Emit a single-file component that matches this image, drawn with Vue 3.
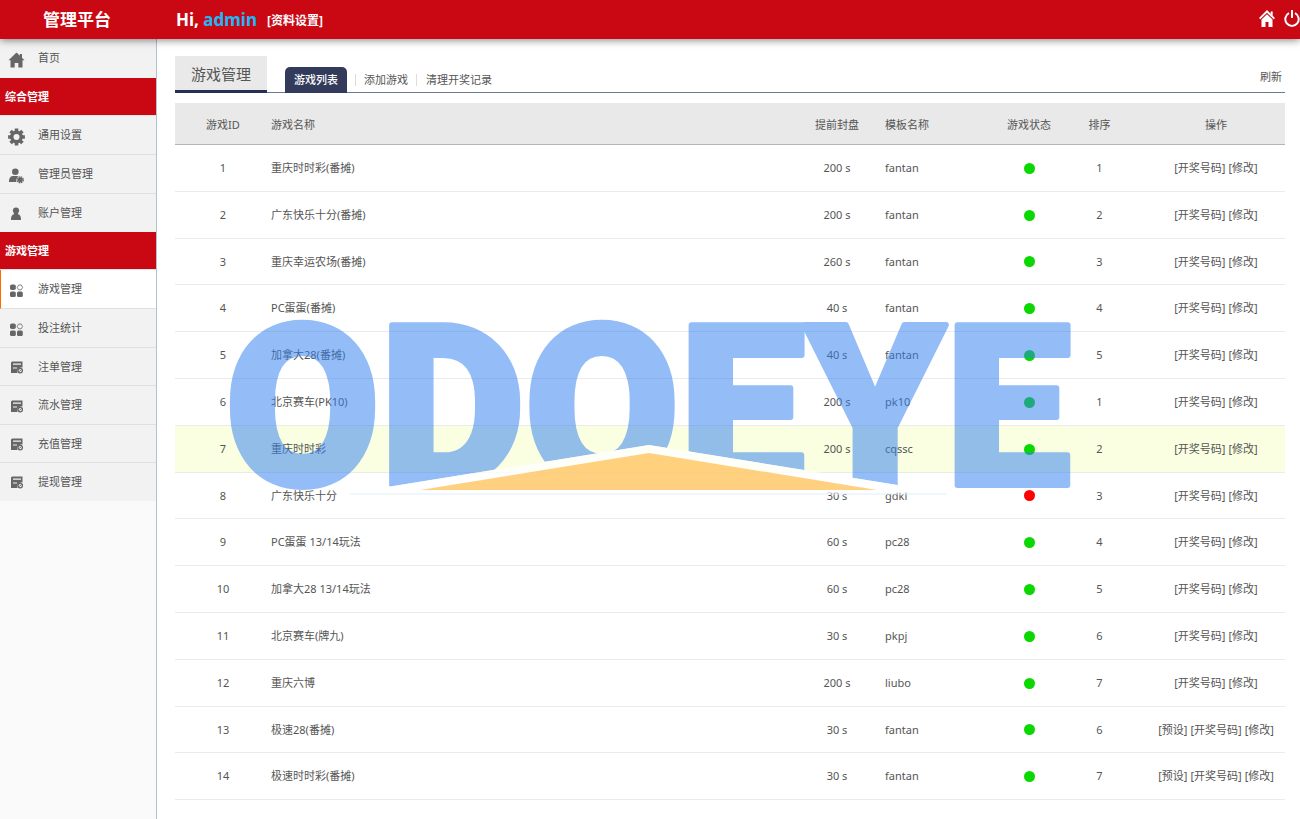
<script setup>
const groups = [
  { title: '', items: [{ label: '首页', icon: 'home' }] },
  {
    title: '综合管理',
    items: [
      { label: '通用设置', icon: 'gear' },
      { label: '管理员管理', icon: 'admin' },
      { label: '账户管理', icon: 'user' },
    ],
  },
  {
    title: '游戏管理',
    items: [
      { label: '游戏管理', icon: 'apps', active: true },
      { label: '投注统计', icon: 'apps' },
      { label: '注单管理', icon: 'book' },
      { label: '流水管理', icon: 'book' },
      { label: '充值管理', icon: 'book' },
      { label: '提现管理', icon: 'book' },
    ],
  },
]

const basic = ['开奖号码', '修改']
const extended = ['预设', '开奖号码', '修改']
const games = [
  { id: 1, name: '重庆时时彩(番摊)', lead: 200, tpl: 'fantan', on: true, sort: 1, ops: basic },
  { id: 2, name: '广东快乐十分(番摊)', lead: 200, tpl: 'fantan', on: true, sort: 2, ops: basic },
  { id: 3, name: '重庆幸运农场(番摊)', lead: 260, tpl: 'fantan', on: true, sort: 3, ops: basic },
  { id: 4, name: 'PC蛋蛋(番摊)', lead: 40, tpl: 'fantan', on: true, sort: 4, ops: basic },
  { id: 5, name: '加拿大28(番摊)', lead: 40, tpl: 'fantan', on: true, sort: 5, ops: basic },
  { id: 6, name: '北京赛车(PK10)', lead: 200, tpl: 'pk10', on: true, sort: 1, ops: basic },
  { id: 7, name: '重庆时时彩', lead: 200, tpl: 'cqssc', on: true, sort: 2, ops: basic, hover: true },
  { id: 8, name: '广东快乐十分', lead: 30, tpl: 'gdkl', on: false, sort: 3, ops: basic },
  { id: 9, name: 'PC蛋蛋 13/14玩法', lead: 60, tpl: 'pc28', on: true, sort: 4, ops: basic },
  { id: 10, name: '加拿大28 13/14玩法', lead: 60, tpl: 'pc28', on: true, sort: 5, ops: basic },
  { id: 11, name: '北京赛车(牌九)', lead: 30, tpl: 'pkpj', on: true, sort: 6, ops: basic },
  { id: 12, name: '重庆六博', lead: 200, tpl: 'liubo', on: true, sort: 7, ops: basic },
  { id: 13, name: '极速28(番摊)', lead: 30, tpl: 'fantan', on: true, sort: 6, ops: extended },
  { id: 14, name: '极速时时彩(番摊)', lead: 30, tpl: 'fantan', on: true, sort: 7, ops: extended },
]
</script>

<template>
  <div class="page">
    <header class="topbar">
      <h1 class="brand">管理平台</h1>
      <p class="hello">Hi, <span class="who">admin</span></p>
      <a class="profile" href="#">[资料设置]</a>
      <nav class="tools">
        <a href="#" aria-label="主页">
          <svg width="16" height="17" viewBox="0 0 16 17" fill="#fff">
            <path d="M8 0 0 8l1.300 1.300L8 2.700l6.700 6.600L16 8l-2.300-2.300V1.500h-2v2.200z" />
            <path d="M8 4.200 2.500 9.600V17h4v-5h3v5h4V9.600z" />
          </svg>
        </a>
        <a href="#" aria-label="退出">
          <svg width="16" height="17" viewBox="0 0 16 17" fill="none" stroke="#fff" stroke-width="2">
            <path d="M5 3.200A6.700 6.700 0 1 0 11 3.200M8 0v8" />
          </svg>
        </a>
      </nav>
    </header>

    <div class="body">
      <aside class="sidebar">
        <section v-for="(g, gi) in groups" :key="gi">
          <h2 v-if="g.title" class="group">{{ g.title }}</h2>
          <ul class="menu">
            <li v-for="item in g.items" :key="item.label">
              <a href="#" class="item" :class="{ active: item.active }">
                <svg class="icon" width="18" height="18" viewBox="0 0 18 18" fill="#666">
                  <path v-if="item.icon === 'home'" d="M9.500 1.500 1.500 9.300h2V16.500h4.200V12h3.600v4.500h4.200V9.300h2l-2.500-2.500V3h-2.200v1.700z" />
                  <g v-else-if="item.icon === 'gear'">
                    <circle cx="9.500" cy="9" r="4.700" fill="none" stroke="#666" stroke-width="3.400" />
                    <g stroke="#666" stroke-width="3.600">
                      <path d="M9.500 .6v3M9.500 14.400v3M1.100 9h3M14.900 9h3M3.600 3.100l2 2M13.400 12.900l2 2M3.600 14.900l2-2M13.400 5.100l2-2" />
                    </g>
                  </g>
                  <g v-else-if="item.icon === 'admin'">
                    <circle cx="8.300" cy="4.800" r="3.300" />
                    <path d="M2 15c0-4 1.400-5.600 3.600-6h4.600l1 .5c-1.500 1.500-2.400 3-1.700 5.500z" />
                    <circle cx="13.300" cy="12.800" r="2.500" />
                    <circle cx="13.300" cy="12.800" r="3" fill="none" stroke="#666" stroke-width="1.200" stroke-dasharray="1.600 .76" />
                  </g>
                  <g v-else-if="item.icon === 'user'">
                    <circle cx="9" cy="5.600" r="3.100" />
                    <path d="M7 8h4l.4 1.500c2 .6 2.600 2 2.600 5.500H4c0-3.500.6-4.900 2.600-5.500z" />
                  </g>
                  <g v-else-if="item.icon === 'apps'">
                    <rect x="3" y="2.500" width="5.800" height="5.600" rx="1.800" />
                    <rect x="3" y="9.500" width="5.800" height="5.600" rx="1.500" />
                    <rect x="10" y="9.500" width="5.800" height="5.600" rx="1.500" />
                    <path d="M11.600 3h2.600L15.600 5.400l-1.400 2.400h-2.600L10.200 5.400z" fill="none" stroke="#777" stroke-width=".9" />
                  </g>
                  <g v-else>
                    <path d="M5 2.500h10.500v6h-1.500a4 4 0 0 0-3.500 5.500H4V3.500z" />
                    <path d="M6 5.200h8M6 9h4" stroke="#f2f2f2" stroke-width="1.200" />
                    <circle cx="13.200" cy="11.600" r="2.200" fill="none" stroke="#666" stroke-width="1.300" />
                    <path d="M12.200 12.600l2-2" stroke="#666" stroke-width="1" />
                  </g>
                </svg>
                {{ item.label }}
              </a>
            </li>
          </ul>
        </section>
      </aside>

      <main class="main">
        <div class="tabs">
          <h2 class="title">游戏管理</h2>
          <nav class="tablist">
            <a href="#" class="tab current">游戏列表</a>
            <a href="#" class="tab">添加游戏</a>
            <a href="#" class="tab">清理开奖记录</a>
          </nav>
          <button type="button" class="refresh">刷新</button>
        </div>

        <table class="games">
          <colgroup>
            <col class="c-id" /><col /><col class="c-lead" /><col class="c-tpl" />
            <col class="c-state" /><col class="c-sort" /><col class="c-ops" />
          </colgroup>
          <thead>
            <tr>
              <th>游戏ID</th>
              <th class="left">游戏名称</th>
              <th>提前封盘</th>
              <th class="left">模板名称</th>
              <th>游戏状态</th>
              <th>排序</th>
              <th>操作</th>
            </tr>
          </thead>
          <tbody>
            <tr v-for="g in games" :key="g.id" :class="{ hover: g.hover }">
              <td>{{ g.id }}</td>
              <td class="left">{{ g.name }}</td>
              <td>{{ g.lead }} s</td>
              <td class="left">{{ g.tpl }}</td>
              <td><span class="dot" :class="{ off: !g.on }"></span></td>
              <td>{{ g.sort }}</td>
              <td class="ops"><a v-for="op in g.ops" :key="op" href="#">[{{ op }}]</a></td>
            </tr>
          </tbody>
        </table>
      </main>
    </div>

    <div class="watermark">
      <svg width="840" height="182" viewBox="0 0 840 182">
        <defs>
          <clipPath id="above-roof">
            <path d="M-10-10H850V192H717V178L419 130 120 178V192H-10z" />
          </clipPath>
        </defs>
        <g clip-path="url(#above-roof)" opacity=".52">
          <text class="mark" x="418" y="170" text-anchor="middle">ODOEYE</text>
        </g>
        <path d="M120 178 419 130 717 178z" fill="#fff" opacity=".75" />
        <path d="M190 175 419 138 647 175z" fill="#ffa50c" opacity=".52" />
        <path d="M120 179H717" stroke="#e3edfb" />
      </svg>
    </div>
  </div>
</template>

<style>
body {
  margin: 0;
}
</style>

<style scoped>
.page {
  position: relative;
  display: flex;
  flex-direction: column;
  min-height: 100vh;
  overflow: hidden;
  background: #fff;
  color: #555;
  font: 11px/16px "Noto Sans", "Noto Sans CJK SC", sans-serif;
}
a {
  color: inherit;
  text-decoration: none;
}
h1, h2, p, ul {
  margin: 0;
  padding: 0;
  list-style: none;
}
.topbar {
  position: relative;
  z-index: 1;
  display: flex;
  align-items: center;
  height: 39px;
  background: #ca0814;
  color: #fff;
  font-weight: 700;
  box-shadow: 0 1px 8px rgba(0, 0, 0, 0.5);
}
.brand {
  width: 154px;
  margin-right: 22px;
  font-size: 17px;
  text-align: center;
}
.hello {
  margin-right: 10px;
  font-size: 17px;
}
.who {
  color: #1cb8f8;
}
.profile {
  padding-top: 2px;
  font-size: 12px;
}
.tools {
  display: flex;
  gap: 9px;
  margin: 0 0 3px auto;
}
.tools svg {
  display: block;
}
.body {
  display: flex;
  flex: 1;
}
.sidebar {
  flex: none;
  width: 156px;
  border-right: 1px solid #afc2cf;
  background: #fafafa;
}
.group {
  height: 37px;
  padding-left: 5px;
  border-bottom: 1px solid #e9e3e4;
  background: #ca0814;
  background-clip: padding-box;
  color: #fff;
  font-size: 11px;
  line-height: 38px;
}
.item {
  display: flex;
  align-items: center;
  gap: 13px;
  box-sizing: border-box;
  height: 39px;
  padding-left: 7px;
  border-bottom: 1px solid #dfdfdf;
  background: #f2f2f2;
}
.menu li:nth-child(2n + 3) .item,
.menu li:last-child:not(:only-child) .item {
  height: 38px;
}
.menu li:last-child .item {
  border-bottom-color: #f2f2f2;
}
.item.active {
  padding-left: 6px;
  border-left: 1px solid #ff6a00;
  background: #fff;
}
.icon {
  flex: none;
  margin-top: 3px;
}
.main {
  flex: 1;
  min-width: 0;
  padding: 17px 15px 0 18px;
}
.tabs {
  display: flex;
  align-items: flex-end;
  margin-bottom: 10px;
  box-shadow: inset 0 -1px #6d7896;
}
.title {
  flex: none;
  padding: 8px 16px 6px;
  border-bottom: 3px solid #252f55;
  background: #e9e9e9;
  font-size: 15px;
  font-weight: 400;
  line-height: 20px;
}
.tablist {
  display: flex;
  align-items: center;
  margin-left: 18px;
}
.tab {
  padding: 0 9px;
  border-left: 1px solid #ddd;
  line-height: 12px;
}
.tab + .tab {
  padding: 0 8px;
}
.tab.current {
  margin-right: 8px;
  border: 0;
  border-radius: 5px 5px 0 0;
  background: #323b5b;
  color: #fff;
  font-weight: 500;
  line-height: 26px;
}
.tab:last-child {
  padding-left: 9px;
}
.refresh {
  margin: 0 3px 8px auto;
  padding: 0;
  border: 0;
  background: none;
  color: inherit;
  font: inherit;
}
.games {
  width: 100%;
  border-collapse: separate;
  border-spacing: 0;
  table-layout: fixed;
}
.c-id { width: 96px; }
.c-lead { width: 96px; }
.c-tpl { width: 121px; }
.c-state { width: 46px; }
.c-sort { width: 95px; }
.c-ops { width: 138px; }
th, td {
  box-sizing: border-box;
  height: 47px;
  padding: 0;
  border-bottom: 1px solid #ebebeb;
  font-weight: 400;
  text-align: center;
  white-space: nowrap;
}
th {
  height: 42px;
  padding-top: 2px;
  border-bottom-color: #b5b5b5;
  background: #e9e9e9;
}
tbody tr:nth-child(5n + 3) td {
  height: 46px;
}
.left {
  text-align: left;
}
.hover td {
  background: #faffe1;
}
.dot {
  display: block;
  width: 11px;
  height: 11px;
  margin: 0 auto;
  border-radius: 50%;
  background: #0bd800;
}
.dot.off {
  background: #f00;
}
.ops a + a {
  margin-left: 3px;
}
.watermark {
  position: absolute;
  inset: 0;
  z-index: 2;
  display: flex;
  align-items: center;
  justify-content: center;
  padding-bottom: 8px;
  pointer-events: none;
}
.watermark svg {
  overflow: visible;
}
.mark {
  font-family: Roboto, "Liberation Sans", sans-serif;
  font-size: 224px;
  font-weight: 900;
  fill: #3281f0;
  stroke: #3281f0;
  stroke-width: 6px;
  stroke-linejoin: round;
}
</style>
